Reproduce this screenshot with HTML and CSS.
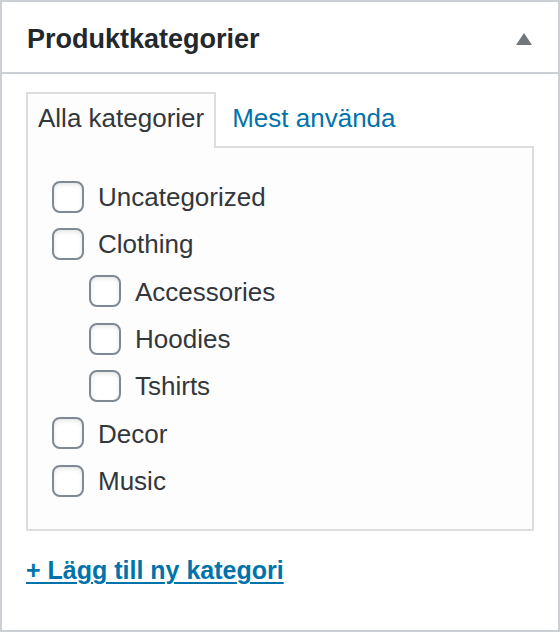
FILE: index.html
```html
<!DOCTYPE html>
<html lang="sv">
<head>
    <meta charset="UTF-8">
    <meta name="viewport" content="width=device-width, initial-scale=1.0">
    <title>Produktkategorier</title>
    <link rel="stylesheet" href="styles.css">
</head>
<body>
    <div class="postbox">
        <div class="hndle">
            <h2>Produktkategorier</h2>
            <svg class="toggle" width="16" height="12" viewBox="0 0 16 12"><polygon points="8,0 16,12 0,12" fill="#72777c"/></svg>
        </div>
        <div class="inside">
            <ul class="category-tabs">
                <li class="tabs">Alla kategorier</li>
                <li><a href="#">Mest använda</a></li>
            </ul>
            <div class="tabs-panel">
                <ul class="categorychecklist">
                    <li><label><input type="checkbox"> Uncategorized</label></li>
                    <li><label><input type="checkbox"> Clothing</label>
                        <ul class="children">
                            <li><label><input type="checkbox"> Accessories</label></li>
                            <li><label><input type="checkbox"> Hoodies</label></li>
                            <li><label><input type="checkbox"> Tshirts</label></li>
                        </ul>
                    </li>
                    <li><label><input type="checkbox"> Decor</label></li>
                    <li><label><input type="checkbox"> Music</label></li>
                </ul>
            </div>
            <p class="category-add"><a href="#">+ Lägg till ny kategori</a></p>
        </div>
    </div>
</body>
</html>
```

FILE: styles.css
```css
body {
    margin: 0;
    font-family: "Liberation Sans", Arial, sans-serif;
    background-color: #fff;
}
.postbox {
    width: 560px;
    height: 632px;
    box-sizing: border-box;
    border: 2px solid #ccd0d4;
    background-color: #fff;
}
.hndle {
    display: flex;
    justify-content: space-between;
    align-items: center;
    height: 70px;
    padding: 0 26px 0 25px;
    border-bottom: 2px solid #ccd0d4;
}
.hndle h2 {
    margin: 3px 0 0;
    font-size: 27px;
    font-weight: bold;
    color: #23282d;
    line-height: 64px;
}
.toggle {
    margin-top: 4px;
}
.inside {
    padding: 18px 24px 43px;
}
.category-tabs {
    display: flex;
    gap: 4px;
    list-style: none;
    margin: 0;
    padding: 0;
    font-size: 26px;
    line-height: 38px;
}
.category-tabs li {
    padding: 5px 10px 9px;
    border: 2px solid transparent;
    border-bottom: none;
}
.category-tabs .tabs {
    color: #32373c;
    border-color: #dddddd;
    background-color: #fdfdfd;
    margin-bottom: -2px;
    position: relative;
}
.category-tabs a {
    color: #0073aa;
    text-decoration: none;
}
.tabs-panel {
    border: 2px solid #dddddd;
    background-color: #fdfdfd;
    padding: 26px 24px 24px;
}
.categorychecklist, .children {
    list-style: none;
    margin: 0;
    padding: 0;
}
.children {
    margin-left: 37px;
}
.categorychecklist label {
    display: flex;
    align-items: center;
    gap: 14px;
    height: 47.33px;
    font-size: 26px;
    color: #32373c;
}
.categorychecklist input {
    appearance: none;
    -webkit-appearance: none;
    width: 32px;
    height: 32px;
    margin: 0 0 2px;
    box-sizing: border-box;
    border: 2px solid #7e8993;
    border-radius: 8px;
    background-color: #fff;
    box-shadow: inset 0 2px 4px rgba(0, 0, 0, 0.1);
}
.category-add {
    margin: 21px 0 0;
    font-size: 25px;
    line-height: 36px;
}
.category-add a {
    color: #0073aa;
    font-weight: bold;
    text-decoration: underline;
    text-underline-offset: 3px;
    text-decoration-thickness: 2px;
}
```
